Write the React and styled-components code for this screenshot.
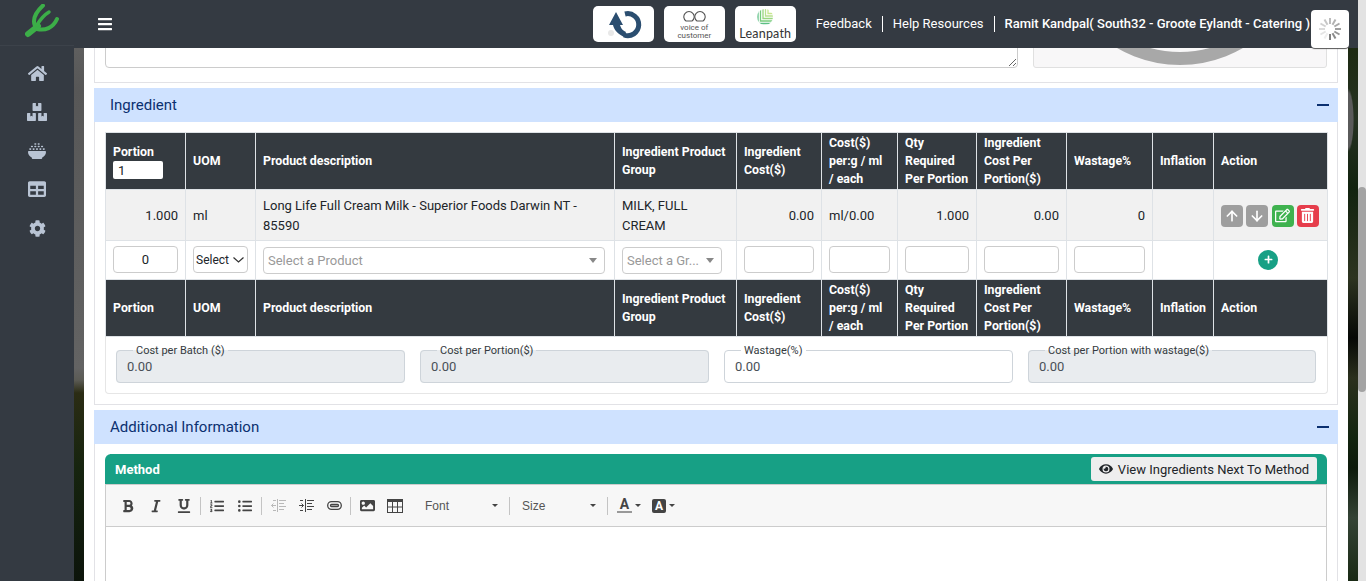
import React from 'react';
import styled, { createGlobalStyle } from 'styled-components';
import { ArrowUp, ArrowDown } from 'lucide-react';
import {
  FaHome,
  FaBoxes,
  FaTable,
  FaCog,
  FaBars,
  FaRegEdit,
  FaTrashAlt,
  FaPlus,
  FaEye,
  FaBold,
  FaItalic,
  FaUnderline,
  FaListOl,
  FaListUl,
  FaImage,
} from 'react-icons/fa';
import { FaBowlRice } from 'react-icons/fa6';

const GlobalStyle = createGlobalStyle`
  html, body {
    margin: 0;
    height: 100%;
    overflow: hidden;
    font-family: Roboto, "Liberation Sans", sans-serif;
    color: #212529;
  }
  * { box-sizing: border-box; }
`;

const Page = styled.div`
  display: flex;
  height: 581px;
  width: 1366px;
`;

const Viewport = styled.div`
  width: 1358px;
  display: flex;
  flex-direction: column;
`;

const Scrollbar = styled.div`
  width: 8px;
  background: #e3e3e3;
  padding-top: 187px;
`;

const ScrollThumb = styled.div`
  height: 205px;
  background: #a3a3a3;
  border-radius: 4px;
`;

const Topbar = styled.header`
  position: relative;
  height: 48px;
  flex: none;
  display: flex;
  align-items: center;
  background: #343a42;
  color: #fff;
  padding-right: 48px;
`;

const LogoCell = styled.div`
  width: 74px;
  height: 46px;
  align-self: flex-start;
  border-bottom: 1px solid #3c424a;
  padding: 4px 0 0 25px;
`;

const MenuToggle = styled.div`
  margin-left: 23px;
  display: flex;
  font-size: 16px;
`;

const Badges = styled.div`
  margin-left: auto;
  display: flex;
  gap: 10px;
  margin-right: 10px;
`;

const Badge = styled.div`
  width: 61px;
  height: 36px;
  background: #fff;
  border-radius: 5px;
  color: #444;
  display: flex;
  flex-direction: column;
  align-items: center;
  overflow: hidden;
  padding-top: ${(p) => p.$pad || 0}px;
`;

const VoiceText = styled.span`
  font-size: 8px;
  line-height: 8px;
  text-align: center;
  color: #555;
  margin-top: 2px;
`;

const LeanText = styled.span`
  font-family: Lato, sans-serif;
  font-size: 12.5px;
  line-height: 13px;
  color: #333;
  letter-spacing: 0.2px;
  margin-top: 1px;
`;

const TopLink = styled.span`
  font-size: 13px;
  line-height: 16px;
  padding: 0 10px;
  font-weight: ${(p) => (p.$strong ? 500 : 400)};
  border-left: ${(p) => (p.$first ? 'none' : '1px solid #fff')};
  white-space: nowrap;
  ${(p) => p.$strong && 'padding-right: 0;'}
`;

const SpinnerButton = styled.div`
  position: absolute;
  top: 10px;
  right: 9px;
  width: 38px;
  height: 38px;
  background: #fff;
  border-radius: 4px;
  box-shadow: 0 1px 1px #555;
  display: flex;
  align-items: center;
  justify-content: center;
`;

const Body = styled.div`
  flex: 1;
  display: flex;
  min-height: 0;
`;

const Sidebar = styled.nav`
  width: 74px;
  flex: none;
  background: #343a42;
  padding-top: 6px;
  display: flex;
  flex-direction: column;
  align-items: center;
`;

const SideIcon = styled.div`
  height: 38.7px;
  display: flex;
  align-items: center;
  color: #b9c4d4;
  font-size: ${(p) => p.$size || 19}px;
`;

const LeftStrip = styled.div`
  width: 10px;
  flex: none;
  background: linear-gradient(
    #5f5f5f 0,
    #575757 40px,
    #636363 320px,
    #5b5b55 332px,
    #2b2c14 345px,
    #16240f 420px,
    #0c140b 533px
  );
`;

const RightStrip = styled.div`
  width: 10px;
  flex: none;
  background:
    radial-gradient(ellipse 6px 32px at 0 72px, #5a5a5a 85%, transparent 100%),
    linear-gradient(
      #1d2a12 0,
      #263222 70px,
      #12230f 140px,
      #2d3420 230px,
      #060806 290px,
      #2b301d 330px,
      #12240f 390px,
      #0d1a0b 420px,
      #344335 470px,
      #1a2a15 533px
    );
`;

const Content = styled.main`
  width: 1264px;
  flex: none;
  background: #fff;
  padding: 0 10px;
  overflow: hidden;
`;

const TopCard = styled.section`
  height: 35px;
  border: 1px solid #e2e2e6;
  border-top: none;
  padding: 0 10px 14px;
  display: flex;
  align-items: flex-end;
  gap: 15px;
  overflow: hidden;
  margin-bottom: 5px;
`;

const NotesArea = styled.textarea`
  width: 913px;
  height: 60px;
  flex: none;
  border: 1px solid #ccc;
  border-radius: 4px;
  display: block;
`;

const PhotoBox = styled.div`
  flex: 1;
  height: 60px;
  background: #f8f7f8;
  border: 1px solid #e0e0e0;
  border-radius: 3px;
  display: flex;
  justify-content: center;
  align-items: flex-end;
`;

const SectionHead = styled.div`
  height: 34px;
  background: #cfe2ff;
  color: #0b3070;
  font-size: 15px;
  display: flex;
  align-items: center;
  justify-content: space-between;
  padding: 0 9px 0 16px;
`;

const Minus = styled.span`
  width: 12px;
  height: 2px;
  background: #0b3070;
`;

const Card = styled.section`
  margin-bottom: 5px;
`;

const CardBody = styled.div`
  border: 1px solid #e2e2e6;
  border-top: none;
  padding: 10px;
`;

const Table = styled.table`
  width: 1222px;
  table-layout: fixed;
  border-collapse: collapse;
  font-size: 13px;
`;

const HeadRow = styled.tr`
  height: 57px;
`;

const Th = styled.th`
  background: #343a40;
  color: #fff;
  border: 1px solid #dee2e6;
  font-size: 12.35px;
  font-weight: 700;
  line-height: 18px;
  text-align: left;
  padding: 0 7px;
`;

const DataRow = styled.tr`
  height: 51px;
  background: #f1f1f1;
`;

const EntryRow = styled.tr`
  height: 39px;
`;

const Td = styled.td`
  border: 1px solid #dee2e6;
  padding: 1px 7px 0;
  line-height: 19.5px;
  text-align: ${(p) => p.$align || 'left'};
`;

const PortionInput = styled.input`
  display: block;
  width: 50px;
  height: 18px;
  border: none;
  border-radius: 2px;
  padding: 0 5px;
  font: 400 13px Roboto, sans-serif;
  color: #212529;
`;

const CellInput = styled.input`
  display: block;
  width: ${(p) => p.$w}px;
  height: 27px;
  margin-bottom: 2px;
  border: 1px solid #ccc;
  border-radius: 4px;
  text-align: center;
  font: 400 13px Roboto, sans-serif;
  color: #212529;
`;

const UomSelect = styled.select`
  display: block;
  width: 55px;
  height: 27px;
  margin-bottom: 2px;
  border: 1px solid #ccc;
  border-radius: 4px;
  font: 400 12px Roboto, sans-serif;
  padding: 0 0 0 2px;
  color: #212529;
  appearance: none;
  background: #fff url("data:image/svg+xml,%3Csvg xmlns='http://www.w3.org/2000/svg' width='11' height='6'%3E%3Cpath d='M.5.5 5.500 5 10.500.5' fill='none' stroke='%23333' stroke-width='1.200'/%3E%3C/svg%3E") no-repeat right 3px center;
`;

const ComboBox = styled.div`
  width: ${(p) => p.$w}px;
  height: 27px;
  border: 1px solid #ccc;
  border-radius: 4px;
  display: flex;
  align-items: center;
  justify-content: space-between;
  padding: 0 7px 0 4px;
  color: #999;
`;

const Caret = styled.span`
  border-left: 4px solid transparent;
  border-right: 4px solid transparent;
  border-top: 5px solid #888;
  flex: none;
`;

const Actions = styled.div`
  display: flex;
  gap: 3.3px;
`;

const ActionButton = styled.span`
  width: 22px;
  height: 22px;
  border-radius: 4px;
  background: ${(p) => p.$bg};
  color: #fff;
  font-size: ${(p) => p.$size || 13}px;
  display: flex;
  align-items: center;
  justify-content: center;
`;

const AddButton = styled.span`
  width: 20px;
  height: 20px;
  margin: 0 0 2px 37px;
  border-radius: 50%;
  background: #17a085;
  color: #fff;
  font-size: 9px;
  display: flex;
  align-items: center;
  justify-content: center;
`;

const Totals = styled.div`
  width: 1223px;
  height: 57px;
  border: 1px solid #e6e6e6;
  border-top: none;
  border-radius: 0 0 4px 4px;
  padding: 5px 10px 0;
  display: grid;
  grid-template-columns: 289px 289px 289px 288px;
  gap: 15px;
`;

const TotalField = styled.fieldset`
  margin: 0;
  padding: 0 10px 6px;
  min-width: 0;
  height: 41px;
  border: 1px solid #ced4da;
  border-radius: 4px;
  background: ${(p) => (p.$editable ? '#fff' : '#e9ecef')};
`;

const TotalLegend = styled.legend`
  font-size: 11px;
  line-height: 14px;
  margin-left: 6px;
  padding: 2px 3px 0;
  color: #343a40;
`;

const TotalValue = styled.div`
  font-size: 13px;
  line-height: 19px;
  margin-top: -1px;
  color: #495057;
`;

const MethodHead = styled.div`
  height: 30px;
  background: #17a085;
  border-radius: 6px 6px 0 0;
  display: flex;
  align-items: center;
  justify-content: space-between;
  padding: 0 10px;
  color: #fff;
  font-size: 13px;
  font-weight: 700;
`;

const MethodButton = styled.span`
  height: 24px;
  width: 226px;
  border-radius: 3px;
  background: #eeeeee;
  color: #212529;
  font-weight: 400;
  display: flex;
  align-items: center;
  justify-content: center;
  gap: 5px;
`;

const Editor = styled.div`
  border: 1px solid #ccc;
  border-top: none;
  height: 200px;
`;

const Toolbar = styled.div`
  height: 43px;
  background: #f7f7f7;
  border-top: 1px solid #ccc;
  border-bottom: 1px solid #ccc;
  display: flex;
  align-items: center;
  padding-left: 8px;
  color: #444;
`;

const ToolButton = styled.span`
  width: 28px;
  display: flex;
  justify-content: center;
  align-items: center;
  font-size: 14px;
  opacity: ${(p) => (p.$dim ? 0.35 : 1)};
`;

const ToolSep = styled.span`
  width: 1px;
  height: 18px;
  background: #c4c4c4;
  margin: 0 ${(p) => p.$gap || 2}px;
`;

const ToolCombo = styled.span`
  width: ${(p) => p.$w}px;
  display: flex;
  align-items: center;
  justify-content: space-between;
  padding: 0 10px 0 ${(p) => p.$left}px;
  font: 400 12px "Liberation Sans", sans-serif;
  color: #555;
`;

const ToolCaret = styled.span`
  border-left: 3px solid transparent;
  border-right: 3px solid transparent;
  border-top: 3px solid #444;
  margin-left: ${(p) => p.$gap || 0}px;
`;

const ColorTool = styled.span`
  display: flex;
  align-items: center;
  width: ${(p) => p.$w}px;
  padding-left: ${(p) => p.$left || 0}px;
`;

const FontLetter = styled.span`
  font-size: 14px;
  font-weight: 700;
  line-height: 13px;
  width: 15px;
  text-align: center;
  border-bottom: 2px solid #999;
`;

const BackLetter = styled.span`
  font-size: 12px;
  font-weight: 700;
  line-height: 14px;
  width: 14px;
  text-align: center;
  color: #fff;
  background: #444;
  border-radius: 2px;
`;

const columns = [
  'Portion',
  'UOM',
  'Product description',
  'Ingredient Product Group',
  'Ingredient Cost($)',
  'Cost($) per:g / ml /\u00a0each',
  'Qty Required Per\u00a0Portion',
  'Ingredient Cost Per Portion($)',
  'Wastage%',
  'Inflation',
  'Action',
];

const widths = [80, 70, 359, 122, 85, 76, 79, 90, 86, 61, 114];

const totals = [
  { label: 'Cost per Batch ($)' },
  { label: 'Cost per Portion($)' },
  { label: 'Wastage(%)', editable: true },
  { label: 'Cost per Portion with wastage($)' },
];

const LogoMark = () => (
  <svg width="34" height="34" viewBox="0 0 34 34" fill="none" stroke="#3cae48" strokeLinecap="round">
    <path d="M3 30 L13 22" strokeWidth="6" />
    <path d="M10 22 C7 15 11 8 18 1.500" strokeWidth="4" />
    <path d="M12 21 C15 16 19 11 24 8" strokeWidth="3.500" />
    <path d="M12 25 C20 27 28 24 32 15" strokeWidth="4" />
  </svg>
);

const Spinner = () => (
  <svg width="26" height="26" viewBox="0 0 26 26" stroke="#777" strokeWidth="2">
    {Array.from({ length: 12 }).map((_, i) => (
      <line
        key={i}
        x1="13"
        y1="2"
        x2="13"
        y2="8"
        opacity={0.12 + (i / 12) * 0.88}
        transform={`rotate(${i * 30 + 210} 13 13)`}
      />
    ))}
  </svg>
);

const AdLogo = () => (
  <svg width="61" height="36" viewBox="0 0 61 36" fill="none">
    <circle cx="18" cy="27" r="3" fill="#e8e8e8" />
    <path d="M32 8 A 11 11 0 1 1 31 29" stroke="#2b4e70" strokeWidth="5" />
    <path d="M23 6 L16 19 L20 19 C21 24 25 28 31 31 L33 26 C29 24 28 22 27 19 L30 19 Z" fill="#2b4e70" />
  </svg>
);

const VoiceLogo = () => (
  <svg width="23" height="12" viewBox="0 0 23 12" fill="none" stroke="#555" strokeWidth="1.100">
    <path d="M3 11 A 5.200 5.200 0 1 1 9 11 Z" />
    <path d="M14 11 A 5.200 5.200 0 1 1 20 11 Z" />
  </svg>
);

const LeanLogo = () => (
  <svg width="18" height="18" viewBox="0 0 18 18" fill="none" strokeWidth="1.300">
    <clipPath id="leanClip">
      <circle cx="9" cy="9" r="8" />
    </clipPath>
    <g clipPath="url(#leanClip)">
      <path d="M12 0 V5.500 H18" stroke="#c8e68f" />
      <path d="M9.500 0 V8 H18" stroke="#b9e08f" />
      <path d="M7 0 V10.500 H18" stroke="#98d67e" />
      <path d="M4.500 0 V13 H18" stroke="#78cb7c" />
      <path d="M2 0 V15.500 H18" stroke="#5cbf84" />
    </g>
  </svg>
);

const IndentIcon = ({ out }) => (
  <svg width="15" height="13" viewBox="0 0 15 13" fill="none" stroke="#444" strokeWidth="1">
    <path d="M6.500 0 V13 M8 1.500 H15 M8 4.500 H13 M8 7.500 H15 M8 10.500 H13" />
    {out ? (
      <path d="M5 6.500 H0.500 M2.500 4.500 L0.500 6.500 L2.500 8.500 M2 1.500 H5 M2 11.500 H5" />
    ) : (
      <path d="M0 6.500 H4.500 M2.500 4.500 L4.500 6.500 L2.500 8.500 M1 1.500 H4 M1 11.500 H4" />
    )}
  </svg>
);

const ChainIcon = () => (
  <svg width="15" height="9" viewBox="0 0 15 9" fill="none" stroke="#444" strokeWidth="1.300">
    <rect x="0.700" y="0.700" width="13.600" height="7.600" rx="3.800" />
    <rect x="3.500" y="3.500" width="8" height="2" rx="1" />
  </svg>
);

const GridIcon = () => (
  <svg width="16" height="14" viewBox="0 0 16 14" fill="none" stroke="#444" strokeWidth="1">
    <rect x="0.500" y="0.500" width="15" height="13" />
    <path d="M0 1.500 H16" strokeWidth="3" />
    <path d="M0 8 H16 M5.500 3 V14 M10.500 3 V14" />
  </svg>
);

const HeadCells = ({ first }) =>
  columns.map((name, i) => (
    <Th key={name}>
      {name}
      {first && i === 0 && <PortionInput defaultValue="1" />}
    </Th>
  ));

const App = () => (
  <Page>
    <GlobalStyle />
    <Viewport>
      <Topbar>
        <LogoCell>
          <LogoMark />
        </LogoCell>
        <MenuToggle>
          <FaBars />
        </MenuToggle>
        <Badges>
          <Badge>
            <AdLogo />
          </Badge>
          <Badge $pad={4}>
            <VoiceLogo />
            <VoiceText>
              voice of
              <br />
              customer
            </VoiceText>
          </Badge>
          <Badge $pad={2}>
            <LeanLogo />
            <LeanText>Leanpath</LeanText>
          </Badge>
        </Badges>
        <TopLink $first>Feedback</TopLink>
        <TopLink>Help Resources</TopLink>
        <TopLink $strong>Ramit Kandpal( South32 - Groote Eylandt - Catering )</TopLink>
        <SpinnerButton>
          <Spinner />
        </SpinnerButton>
      </Topbar>
      <Body>
        <Sidebar>
          <SideIcon $size={19}>
            <FaHome />
          </SideIcon>
          <SideIcon $size={20}>
            <FaBoxes />
          </SideIcon>
          <SideIcon $size={18}>
            <FaBowlRice />
          </SideIcon>
          <SideIcon $size={18}>
            <FaTable />
          </SideIcon>
          <SideIcon $size={17}>
            <FaCog />
          </SideIcon>
        </Sidebar>
        <LeftStrip />
        <Content>
          <TopCard>
            <NotesArea />
            <PhotoBox>
              <svg width="140" height="19" viewBox="0 0 140 19" fill="none">
                <circle cx="70" cy="-108" r="118.500" stroke="#a8a8a8" strokeWidth="13" />
              </svg>
            </PhotoBox>
          </TopCard>

          <Card>
            <SectionHead>
              Ingredient
              <Minus />
            </SectionHead>
            <CardBody>
              <Table>
                <colgroup>
                  {widths.map((w, i) => (
                    <col key={i} width={w} />
                  ))}
                </colgroup>
                <tbody>
                  <HeadRow>
                    <HeadCells first />
                  </HeadRow>
                  <DataRow>
                    <Td $align="right">1.000</Td>
                    <Td>ml</Td>
                    <Td>Long Life Full Cream Milk - Superior Foods Darwin NT - 85590</Td>
                    <Td>MILK, FULL CREAM</Td>
                    <Td $align="right">0.00</Td>
                    <Td>ml/0.00</Td>
                    <Td $align="right">1.000</Td>
                    <Td $align="right">0.00</Td>
                    <Td $align="right">0</Td>
                    <Td />
                    <Td>
                      <Actions>
                        <ActionButton $bg="#9e9e9e">
                          <ArrowUp size={16} strokeWidth={2.5} />
                        </ActionButton>
                        <ActionButton $bg="#9e9e9e">
                          <ArrowDown size={16} strokeWidth={2.5} />
                        </ActionButton>
                        <ActionButton $bg="#3fb24f" $size={15}>
                          <FaRegEdit />
                        </ActionButton>
                        <ActionButton $bg="#e63e4c" $size={15}>
                          <FaTrashAlt />
                        </ActionButton>
                      </Actions>
                    </Td>
                  </DataRow>
                  <EntryRow>
                    <Td>
                      <CellInput $w={65} defaultValue="0" />
                    </Td>
                    <Td>
                      <UomSelect>
                        <option>Select</option>
                      </UomSelect>
                    </Td>
                    <Td>
                      <ComboBox $w={342}>
                        Select a Product
                        <Caret />
                      </ComboBox>
                    </Td>
                    <Td>
                      <ComboBox $w={100}>
                        Select a Gr...
                        <Caret />
                      </ComboBox>
                    </Td>
                    <Td>
                      <CellInput $w={70} />
                    </Td>
                    <Td>
                      <CellInput $w={61} />
                    </Td>
                    <Td>
                      <CellInput $w={64} />
                    </Td>
                    <Td>
                      <CellInput $w={75} />
                    </Td>
                    <Td>
                      <CellInput $w={71} />
                    </Td>
                    <Td />
                    <Td>
                      <AddButton>
                        <FaPlus />
                      </AddButton>
                    </Td>
                  </EntryRow>
                  <HeadRow>
                    <HeadCells />
                  </HeadRow>
                </tbody>
              </Table>
              <Totals>
                {totals.map((t) => (
                  <TotalField key={t.label} $editable={t.editable}>
                    <TotalLegend>{t.label}</TotalLegend>
                    <TotalValue>0.00</TotalValue>
                  </TotalField>
                ))}
              </Totals>
            </CardBody>
          </Card>

          <Card>
            <SectionHead>
              Additional Information
              <Minus />
            </SectionHead>
            <CardBody>
              <MethodHead>
                Method
                <MethodButton>
                  <FaEye size={14} />
                  View Ingredients Next To Method
                </MethodButton>
              </MethodHead>
              <Editor>
                <Toolbar>
                  <ToolButton>
                    <FaBold />
                  </ToolButton>
                  <ToolButton>
                    <FaItalic />
                  </ToolButton>
                  <ToolButton>
                    <FaUnderline />
                  </ToolButton>
                  <ToolSep />
                  <ToolButton>
                    <FaListOl />
                  </ToolButton>
                  <ToolButton>
                    <FaListUl />
                  </ToolButton>
                  <ToolSep />
                  <ToolButton $dim>
                    <IndentIcon out />
                  </ToolButton>
                  <ToolButton>
                    <IndentIcon />
                  </ToolButton>
                  <ToolButton>
                    <ChainIcon />
                  </ToolButton>
                  <ToolSep />
                  <ToolButton>
                    <FaImage size={15} />
                  </ToolButton>
                  <ToolButton>
                    <GridIcon />
                  </ToolButton>
                  <ToolCombo $w={99} $left={16}>
                    Font
                    <ToolCaret />
                  </ToolCombo>
                  <ToolSep $gap={1} />
                  <ToolCombo $w={95} $left={11}>
                    Size
                    <ToolCaret />
                  </ToolCombo>
                  <ToolSep $gap={1} />
                  <ColorTool $w={36} $left={8}>
                    <FontLetter>A</FontLetter>
                    <ToolCaret $gap={3} />
                  </ColorTool>
                  <ColorTool $w={30} $left={7}>
                    <BackLetter>A</BackLetter>
                    <ToolCaret $gap={3} />
                  </ColorTool>
                </Toolbar>
              </Editor>
            </CardBody>
          </Card>
        </Content>
        <RightStrip />
      </Body>
    </Viewport>
    <Scrollbar>
      <ScrollThumb />
    </Scrollbar>
  </Page>
);

export default App;
